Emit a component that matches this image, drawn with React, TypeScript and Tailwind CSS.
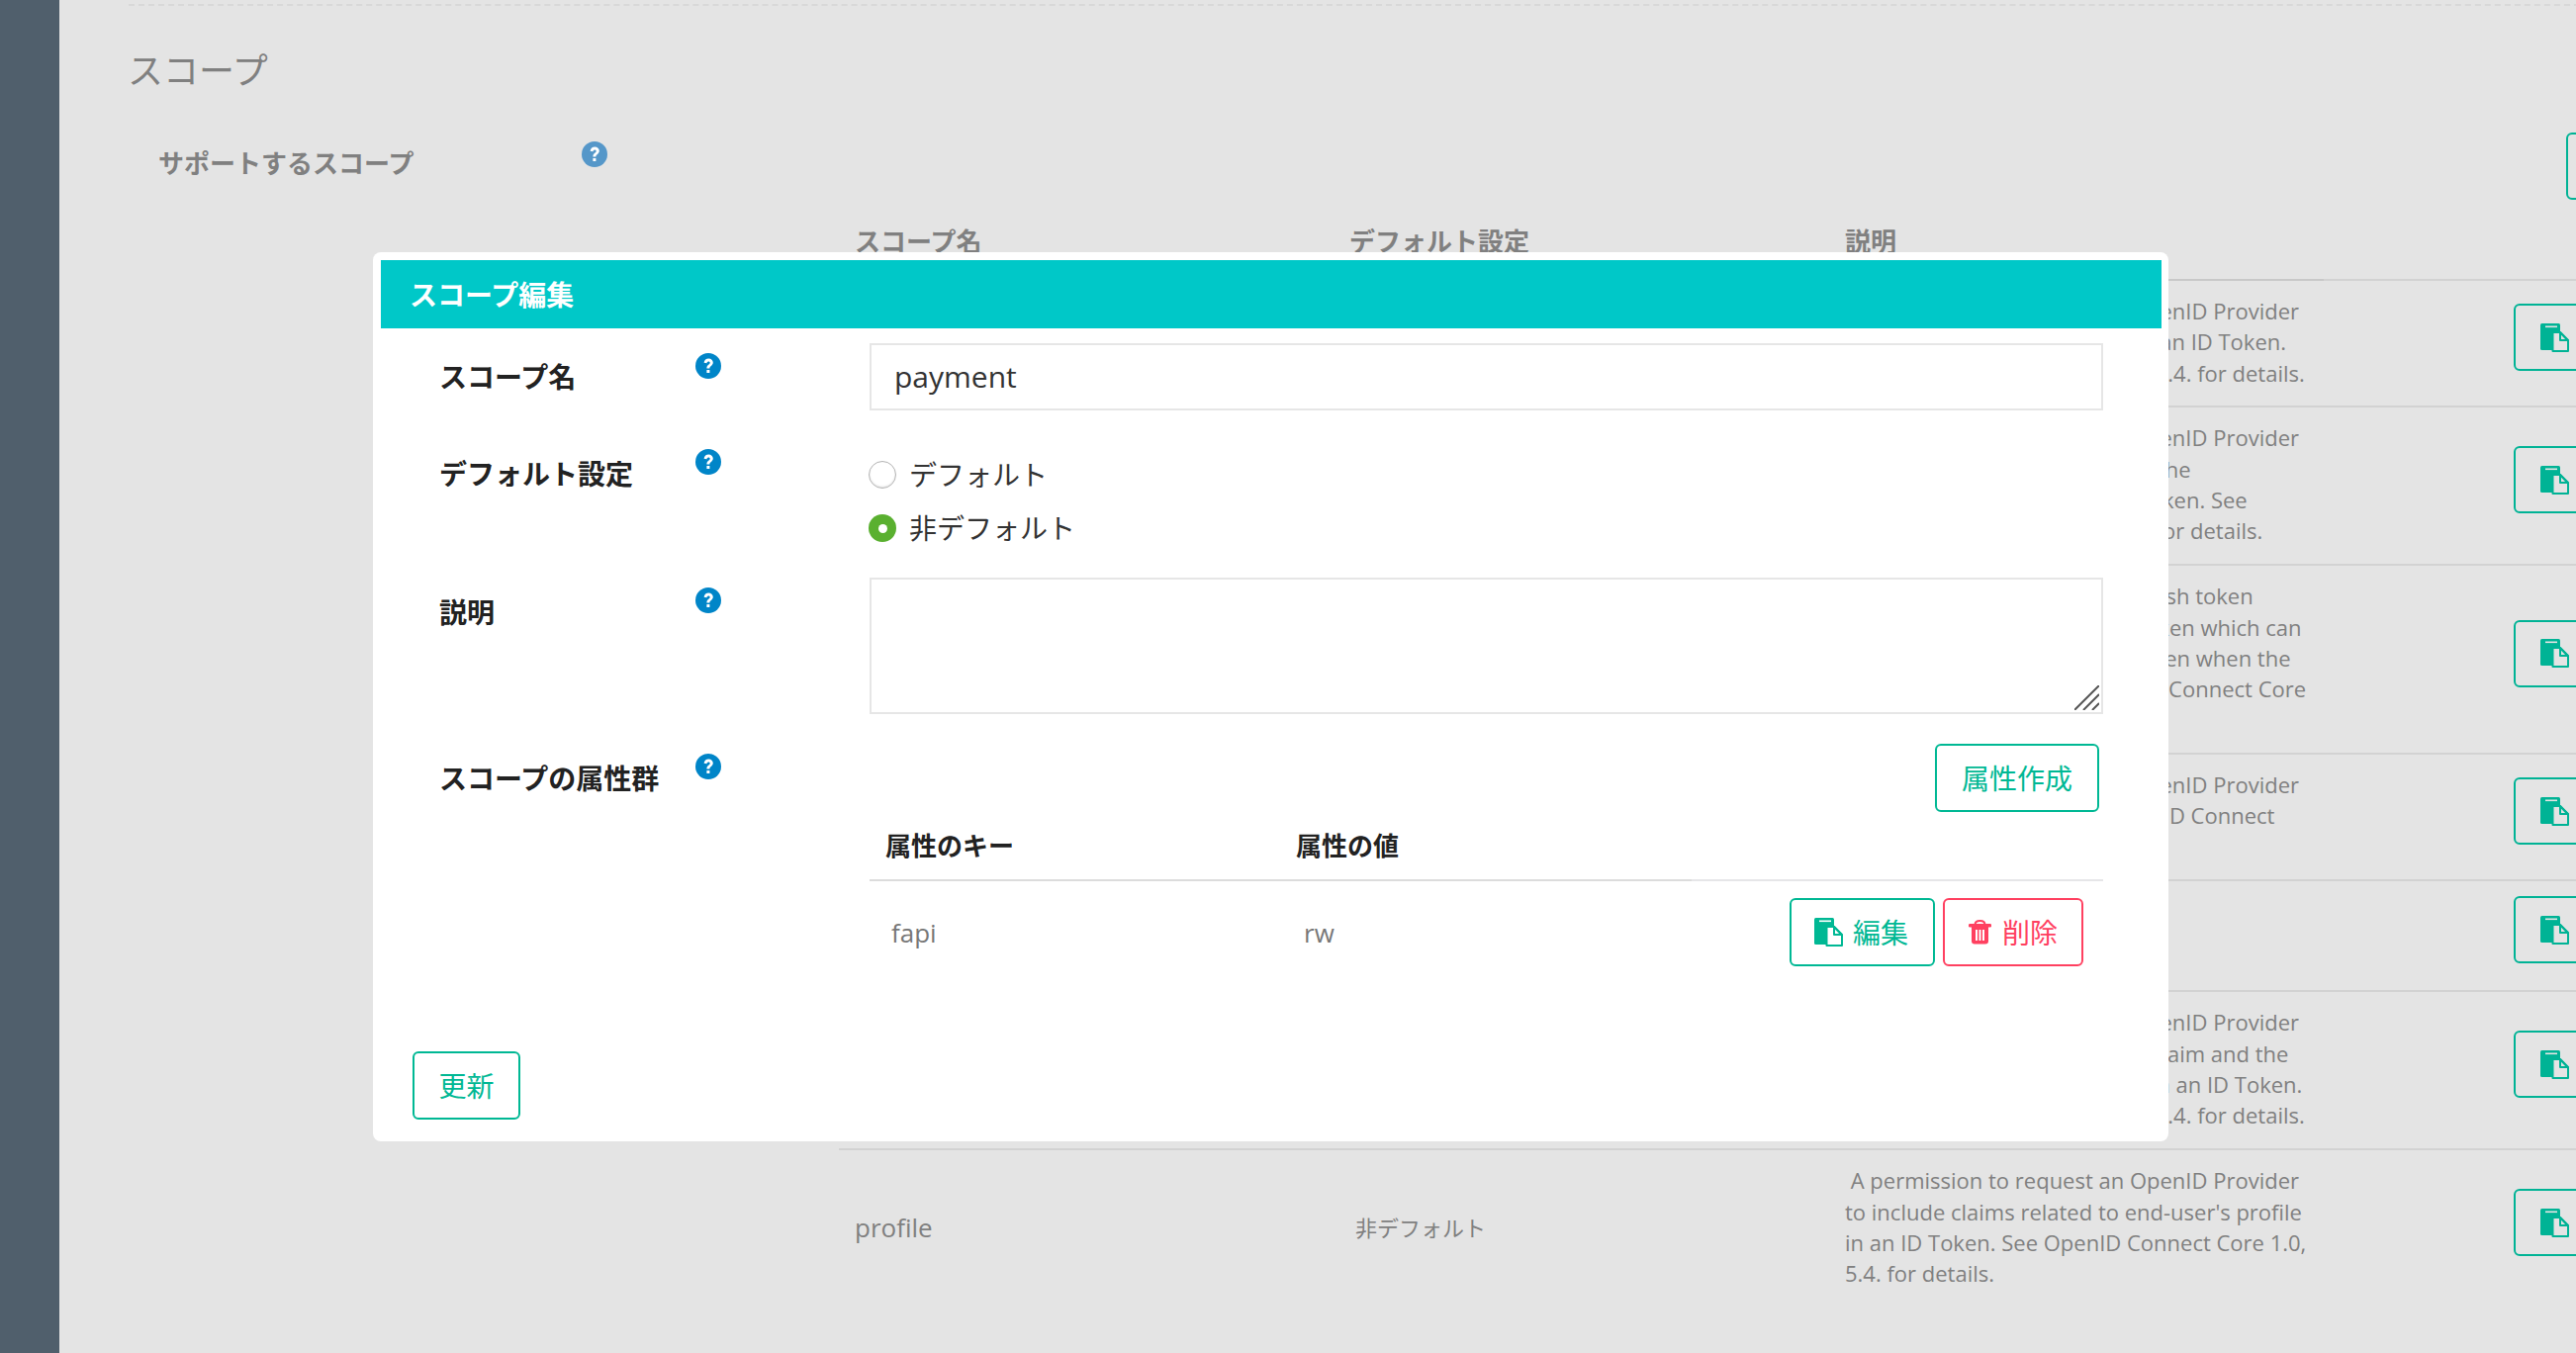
const rows = [
  {
    name: "address",
    def: "非デフォルト",
    height: "h-[128px]",
    lines: [
      "\u00a0A permission to request an OpenID Provider",
      "to include the address claim in an ID Token.",
      "See OpenID Connect Core 1.0, 5.4. for details.",
    ],
  },
  {
    name: "email",
    def: "非デフォルト",
    height: "h-[160px]",
    lines: [
      "\u00a0A permission to request an OpenID Provider",
      "to include the website claim in the",
      "claims of an issued access ID token. See",
      "OpenID Connect Core 1.0, 5.4. for details.",
    ],
  },
  {
    name: "offline_access",
    def: "非デフォルト",
    height: "h-[191px]",
    lines: [
      "\u00a0A permission to request a refresh token",
      "issue to obtain a new access token which can",
      "be used to get a new access token when the",
      "an old one expires. See OpenID Connect Core",
      "1.0, 11.",
    ],
  },
  {
    name: "openid",
    def: "デフォルト",
    height: "h-[128px]",
    lines: [
      "\u00a0A permission to request an OpenID Provider",
      "to enable the usage of an OpenID Connect",
      "protocol flow.",
    ],
  },
  { name: "payment", def: "非デフォルト", height: "h-[112px]", lines: [] },
  {
    name: "phone",
    def: "非デフォルト",
    height: "h-[160px]",
    lines: [
      "\u00a0A permission to request an OpenID Provider",
      "to include the phone_number claim and the",
      "phone_number_verified claim in an ID Token.",
      "See OpenID Connect Core 1.0, 5.4. for details.",
    ],
  },
  {
    name: "profile",
    def: "非デフォルト",
    height: "h-[160px]",
    lines: [
      "\u00a0A permission to request an OpenID Provider",
      "to include claims related to end-user's profile",
      "in an ID Token. See OpenID Connect Core 1.0,",
      "5.4. for details.",
    ],
  },
];

function EditIcon({ paper }: { paper: string }) {
  return (
    <svg viewBox="0 0 29 29" className="h-[29px] w-[29px] shrink-0" fill="currentColor">
      <rect x="0" y="0" width="20" height="27" rx="1.5" />
      <rect x="5" y="2.5" width="12" height="1.6" fill={paper} />
      <path d="M12.5 9H20L28 17.5V28H12.5Z" fill={paper} stroke="currentColor" strokeWidth="2" strokeLinejoin="round" />
      <path d="M20 9V17H28Z" fill="none" stroke="currentColor" strokeWidth="2" strokeLinejoin="round" />
    </svg>
  );
}

function TrashIcon() {
  return (
    <svg viewBox="0 0 23 25" className="h-[25px] w-[23px] shrink-0" fill="currentColor">
      <path d="M6.5 5C6.5 2 8.5 1 11.5 1S16.5 2 16.5 5" fill="none" stroke="currentColor" strokeWidth="2" />
      <rect x="0" y="4" width="23" height="3.5" rx="1.2" />
      <path d="M3 7H20V21.5A3 3 0 0 1 17 24.5H6A3 3 0 0 1 3 21.5Z" />
      <rect x="7" y="10" width="2" height="11" fill="#ffffff" />
      <rect x="10.5" y="10" width="2" height="11" fill="#ffffff" />
      <rect x="14" y="10" width="2" height="11" fill="#ffffff" />
    </svg>
  );
}

function HelpIcon({ className }: { className: string }) {
  return (
    <svg viewBox="0 0 26 26" className={`h-[26px] w-[26px] shrink-0 ${className}`}>
      <circle cx="13" cy="13" r="13" fill="currentColor" />
      <path
        d="M8.6 9.8C8.9 7 10.9 5.5 13.3 5.5C15.8 5.5 17.8 7.2 17.8 9.6C17.8 11.3 16.8 12.3 15.6 13.2C14.7 13.9 14.4 14.3 14.4 15.6H11.4C11.4 13.6 12 12.7 13.2 11.8C14.2 11.1 14.7 10.6 14.7 9.8C14.7 9 14.1 8.4 13.2 8.4C12.2 8.4 11.6 9.1 11.5 10.2Z"
        fill="#ffffff"
      />
      <rect x="11.4" y="17" width="3" height="3" fill="#ffffff" />
    </svg>
  );
}

export default function App() {
  return (
    <div className="relative flex h-[1368px] overflow-hidden bg-[#e4e4e4] font-['Open_Sans','Noto_Sans_CJK_JP',sans-serif]">
      {/* Sidebar */}
      <div className="w-[60px] shrink-0 bg-[#505f6c]" />

      {/* Dimmed page behind the dialog */}
      <div className="flex-1">
        <div className="ml-[70px] mt-[4px] border-t-2 border-dashed border-[#d8d8d8]" />
        <h1 className="ml-[69px] mt-[44px] text-[36px] leading-[44px] font-normal text-[#808080]">スコープ</h1>

        <div className="relative flex">
          <div className="ml-[100px] mt-[53px] text-[26px] leading-[36px] font-bold text-[#808080]">サポートするスコープ</div>
          <HelpIcon className="ml-[170px] mt-[49px] text-[#5597c9]" />
          <div className="absolute left-[2534px] top-[40px] h-[68px] w-[80px] rounded-md border-2 border-[#00b395]" />
        </div>

        <div className="ml-[788px] mt-[43px]">
          <div className="flex h-[36px] items-center text-[26px] font-bold text-[#808080]">
            <div className="w-[516px] pl-[16px]">スコープ名</div>
            <div className="w-[501px]">デフォルト設定</div>
            <div>説明</div>
          </div>
          <div className="mt-[20px] flex h-[2px] bg-[#d2d2d2]">
            <div className="w-[1501px] bg-[#c8c8c8]" />
          </div>

          {rows.map((row, i) => (
            <div
              key={row.name}
              className={`flex items-center border-b-2 pb-[2px] ${i === rows.length - 1 ? "border-transparent" : "border-[#d2d2d2]"} ${row.height}`}
            >
              <div className="w-[516px] pl-[16px] text-[26px] text-[#808080]">{row.name}</div>
              <div className="w-[501px] pl-[6px] text-[22px] text-[#808080]">{row.def}</div>
              <div className="w-[676px] text-[22px] leading-[31.3px] text-[#808080]">
                {row.lines.map((line) => (
                  <div key={line} className="whitespace-nowrap">{line}</div>
                ))}
              </div>
              <button className="mb-[10px] flex h-[68px] w-[147px] shrink-0 items-center gap-[11px] rounded-md border-2 border-[#00b395] pl-[25px] text-[28px] text-[#00b395]">
                <EditIcon paper="#e4e4e4" />
                編集
              </button>
            </div>
          ))}
        </div>
      </div>

      {/* Dialog */}
      <div className="absolute left-[377px] top-[255px] w-[1815px] rounded-lg bg-white pb-[22px] pl-2 pr-[7px] pt-2">
        <div className="flex h-[69px] items-center bg-[#00c8c8] pl-[29px] text-[28px] font-bold text-white">スコープ編集</div>

        <div className="px-[59px] pt-[15px]">
          <div className="flex">
            <div className="flex w-[435px] shrink-0">
              <label className="w-[259px] pt-[14px] text-[28px] leading-[40px] font-bold text-[#222222]">スコープ名</label>
              <HelpIcon className="mt-[10px] text-[#0085c8]" />
            </div>
            <input
              readOnly
              value="payment"
              className="h-[68px] flex-1 border-2 border-[#e6e6e6] pb-[2px] pl-[23px] text-[30px] text-[#333333] outline-none"
            />
          </div>

          <div className="mt-[39px] flex">
            <div className="flex w-[435px] shrink-0">
              <label className="w-[259px] pt-[11px] text-[28px] leading-[28px] font-bold text-[#222222]">デフォルト設定</label>
              <HelpIcon className="text-[#0085c8]" />
            </div>
            <div className="flex flex-col gap-[26px] pt-[12px] text-[28px] leading-[28px] text-[#333333]">
              <div className="-ml-[1px] flex items-center gap-[13px]">
                <span className="h-[28px] w-[28px] rounded-full border border-[#b4b4b4] bg-white shadow-[inset_0_-1px_2px_rgba(0,0,0,0.12)]" />
                デフォルト
              </div>
              <div className="-ml-[1px] flex items-center gap-[13px]">
                <span className="flex h-[28px] w-[28px] items-center justify-center rounded-full bg-[#5ab030]">
                  <span className="h-[9px] w-[9px] rounded-full bg-white" />
                </span>
                非デフォルト
              </div>
            </div>
          </div>

          <div className="mt-[36px] flex">
            <div className="flex w-[435px] shrink-0">
              <label className="w-[259px] pt-[21px] text-[28px] leading-[28px] font-bold text-[#222222]">説明</label>
              <HelpIcon className="mt-[10px] text-[#0085c8]" />
            </div>
            <div className="relative flex-1">
              <textarea readOnly className="block h-[138px] w-full resize-none border-2 border-[#e6e6e6] outline-none" />
              {/* resize grip */}
              <svg viewBox="0 0 25 25" className="absolute bottom-[4px] right-[4px] h-[25px] w-[25px]" stroke="#555555" strokeWidth="2">
                <path d="M0 25L25 0M9 25L25 9M18 25L25 18" />
              </svg>
            </div>
          </div>

          <div className="mt-[30px] flex">
            <div className="flex w-[435px] shrink-0">
              <label className="w-[259px] pt-[21px] text-[28px] leading-[28px] font-bold text-[#222222]">スコープの属性群</label>
              <HelpIcon className="mt-[10px] text-[#0085c8]" />
            </div>
            <div className="flex flex-1 flex-col">
              <button className="mr-[4px] h-[69px] w-[166px] self-end rounded-md border-2 border-[#00b894] text-[28px] text-[#00b894]">属性作成</button>
              <div className="flex h-[68px] items-center text-[26px] font-bold text-[#222222]">
                <div className="w-[431px] pl-[16px]">属性のキー</div>
                <div>属性の値</div>
              </div>
              <div className="flex h-[2px] bg-[#e6e6e8]">
                <div className="w-[831px] bg-[#dcdcdc]" />
              </div>
              <div className="mt-[17px] flex items-center">
                <div className="w-[439px] pl-[22px] pt-[2px] text-[26px] text-[#777777]">fapi</div>
                <div className="pt-[2px] text-[26px] text-[#777777]">rw</div>
                <div className="ml-auto mr-[20px] flex gap-2">
                  <button className="flex h-[69px] w-[147px] items-center gap-[10px] rounded-md border-2 border-[#00b894] pl-[23px] text-[28px] text-[#00b894]">
                    <EditIcon paper="#ffffff" />
                    編集
                  </button>
                  <button className="flex h-[69px] w-[142px] items-center gap-[11px] rounded-md border-2 border-[#ff4060] pl-[24px] text-[28px] text-[#ff4060]">
                    <TrashIcon />
                    削除
                  </button>
                </div>
              </div>
            </div>
          </div>

          <button className="-ml-[27px] mt-[86px] block h-[69px] w-[109px] rounded-md border-2 border-[#00b894] text-[28px] text-[#00b894]">更新</button>
        </div>
      </div>
    </div>
  );
}
